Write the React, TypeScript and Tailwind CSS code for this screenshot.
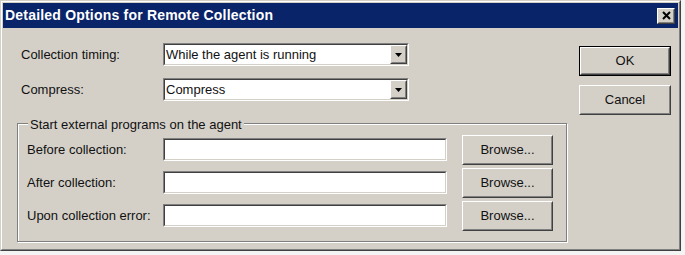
import type { ReactNode } from "react";

// classic 3d edges
const raised =
  "border border-t-white border-l-white border-r-[#404040] border-b-[#404040]";
const raisedInner =
  "border border-t-[#d4d0c8] border-l-[#d4d0c8] border-r-[#808080] border-b-[#808080]";
const sunken =
  "border border-t-[#808080] border-l-[#808080] border-r-white border-b-white";
const sunkenInner =
  "border border-t-[#404040] border-l-[#404040] border-r-[#d4d0c8] border-b-[#d4d0c8]";

function Button({
  children,
  isDefault,
  className = "",
}: {
  children: ReactNode;
  isDefault?: boolean;
  className?: string;
}) {
  const face = (
    <div className={`flex-1 flex ${raised}`}>
      <div
        className={`flex-1 flex items-center justify-center bg-[#d4d0c8] ${raisedInner}`}
      >
        {children}
      </div>
    </div>
  );
  return (
    <div className={`flex ${isDefault ? "border border-black" : ""} ${className}`}>
      {face}
    </div>
  );
}

function Sunken({
  children,
  className = "",
}: {
  children?: ReactNode;
  className?: string;
}) {
  return (
    <div className={`flex ${sunken} ${className}`}>
      <div className={`flex-1 flex items-center bg-white ${sunkenInner}`}>
        {children}
      </div>
    </div>
  );
}

function Combo({ value }: { value: string }) {
  return (
    <Sunken className="w-[246px] h-[23px]">
      <span className="flex-1 pl-[1px] leading-none">{value}</span>
      <div className={`w-[17px] h-full flex ${raised}`}>
        <div
          className={`flex-1 flex items-center justify-center bg-[#d4d0c8] ${raisedInner}`}
        >
          <svg width="7" height="4" viewBox="0 0 7 4">
            <path d="M0 0h7L3.5 4z" fill="#000" />
          </svg>
        </div>
      </div>
    </Sunken>
  );
}

function ProgramRow({ label }: { label: string }) {
  return (
    <div className="flex items-center h-[33px]">
      <span className="w-[136px]">{label}</span>
      <Sunken className="w-[284px] h-[23px]" />
      <Button className="ml-[15px] w-[91px] h-[30px]">Browse...</Button>
    </div>
  );
}

export default function App() {
  return (
    <div className="w-[685px] h-[255px] bg-[#f4f4f4] font-['Liberation_Sans',Arial,sans-serif] text-[13px] text-[#111]">
      <div className="w-[681px] h-[251px] flex border border-t-[#d4d0c8] border-l-[#d4d0c8] border-r-[#404040] border-b-[#404040]">
        <div className="flex-1 flex flex-col p-[1px] bg-[#d4d0c8] border border-t-white border-l-white border-r-[#808080] border-b-[#808080]">
          {/* title bar */}
          <div className="h-[25px] flex items-center bg-[#0a246a] pl-[2px] pr-[3px]">
            <span className="flex-1 text-white font-bold text-[14px] tracking-[0.2px]">
              Detailed Options for Remote Collection
            </span>
            <Button className="w-[18px] h-[16px]">
              <svg width="9" height="9" viewBox="0 0 9 9">
                <path
                  d="M1 1l7 7M8 1l-7 7"
                  stroke="#000"
                  strokeWidth="2"
                />
              </svg>
            </Button>
          </div>

          {/* body */}
          <div className="flex-1 flex pl-[14px]">
            <div className="w-[550px] pt-[15px] flex flex-col">
              <div className="flex items-center h-[23px]">
                <span className="w-[146px] pl-[4px]">Collection timing:</span>
                <Combo value="While the agent is running" />
              </div>
              <div className="flex items-center h-[23px] mt-[12px]">
                <span className="w-[146px] pl-[4px]">Compress:</span>
                <Combo value="Compress" />
              </div>

              <div className="relative mt-[22px] h-[119px] border border-[#808080] shadow-[inset_1px_1px_0_#fff,1px_1px_0_#fff] pt-[9px] pl-[9px]">
                <span className="absolute -top-[9px] left-[10px] px-[2px] bg-[#d4d0c8]">
                  Start external programs on the agent
                </span>
                <ProgramRow label="Before collection:" />
                <ProgramRow label="After collection:" />
                <ProgramRow label="Upon collection error:" />
              </div>
            </div>

            <div className="ml-[12px] w-[92px] pt-[18px] flex flex-col">
              <Button isDefault className="h-[30px]">
                OK
              </Button>
              <Button className="h-[30px] mt-[9px]">Cancel</Button>
            </div>
          </div>
        </div>
      </div>
    </div>
  );
}
